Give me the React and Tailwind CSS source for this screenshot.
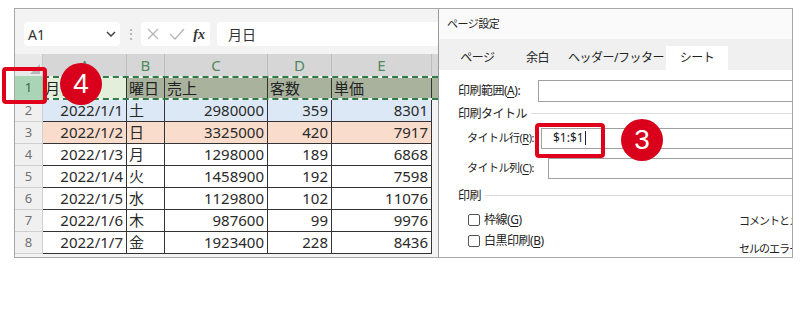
import React from 'react';

const rows = [
  { n: 2, date: '2022/1/1', day: '土', sales: '2980000', cust: '359', unit: '8301', bg: 'bg-[#dce8f5]' },
  { n: 3, date: '2022/1/2', day: '日', sales: '3325000', cust: '420', unit: '7917', bg: 'bg-[#f9dccc]' },
  { n: 4, date: '2022/1/3', day: '月', sales: '1298000', cust: '189', unit: '6868', bg: 'bg-white' },
  { n: 5, date: '2022/1/4', day: '火', sales: '1458900', cust: '192', unit: '7598', bg: 'bg-white' },
  { n: 6, date: '2022/1/5', day: '水', sales: '1129800', cust: '102', unit: '11076', bg: 'bg-white' },
  { n: 7, date: '2022/1/6', day: '木', sales: '987600', cust: '99', unit: '9976', bg: 'bg-white' },
  { n: 8, date: '2022/1/7', day: '金', sales: '1923400', cust: '228', unit: '8436', bg: 'bg-white' },
];

const cols = [
  { key: 'A', w: 'w-[84px]' },
  { key: 'B', w: 'w-[38px]' },
  { key: 'C', w: 'w-[103px]' },
  { key: 'D', w: 'w-[64px]' },
  { key: 'E', w: 'w-[100px]' },
];

function Key({ k }) {
  return <span className="underline underline-offset-2">{k}</span>;
}

function Checkbox({ label, k }) {
  return (
    <div className="flex items-center h-[21px] pl-[29px] text-[12px] tracking-[-0.5px] text-[#222] whitespace-nowrap">
      <span className="w-[12px] h-[12px] border border-[#555] rounded-[2px] bg-white mr-[4px] shrink-0" />
      <span>
        {label}(<Key k={k} />)
      </span>
    </div>
  );
}

function App() {
  return (
    <div className="relative w-[800px] h-[333px] bg-white overflow-hidden font-['Noto_Sans','Noto_Sans_CJK_JP',sans-serif]">
      <div className="ml-[14px] mt-[8px] w-[779px] h-[250px] border border-[#a8a8a8] flex overflow-hidden">
        {/* Excel pane */}
        <div className="w-[423px] shrink-0 bg-[#f3f3f3] flex flex-col">
          <div className="flex items-center h-[24px] mt-[13px] pl-[9px]">
            <div className="w-[96px] h-[24px] bg-white rounded-[4px] flex items-center justify-between px-[4px] text-[14px] text-[#333]">
              <span>A1</span>
              <svg width="10" height="6" viewBox="0 0 10 6" fill="none" stroke="#444" strokeWidth="1.5">
                <path d="M1 1l4 4 4-4" />
              </svg>
            </div>
            <div className="w-[21px] flex justify-center text-[#999] text-[12px]">⋮</div>
            <div className="w-[69px] h-[24px] bg-white rounded-[4px] flex items-center justify-between px-[5px]">
              <svg width="14" height="14" viewBox="0 0 14 14" fill="none" stroke="#b5b5b5" strokeWidth="1.3">
                <path d="M2 2l10 10M12 2L2 12" />
              </svg>
              <svg width="16" height="14" viewBox="0 0 16 14" fill="none" stroke="#b5b5b5" strokeWidth="1.3">
                <path d="M1 7l5 5 9-10" />
              </svg>
              <span className="text-[14px] italic font-['Liberation_Serif',serif] font-bold text-[#333]">fx</span>
            </div>
            <div className="flex-1 h-[24px] ml-[7px] bg-white rounded-l-[4px] flex items-center pl-[11px] text-[14px] text-[#333]">
              月日
            </div>
          </div>

          <div className="mt-[8px] flex flex-col">
            {/* column headers */}
            <div className="flex h-[22px] text-[15px]">
              <div className="w-[28px] bg-[#e8e8e8] border-r border-[#c8c8c8] relative">
                <div className="absolute right-[2px] bottom-[2px] w-0 h-0 border-l-[10px] border-l-transparent border-b-[10px] border-b-[#b8b8b8]" />
              </div>
              {cols.map((c) => (
                <div key={c.key} className={`${c.w} bg-[#d6d6d6] border-r border-[#bdbdbd] flex items-center justify-center text-[#4f8a60]`}>
                  {c.key}
                </div>
              ))}
              <div className="flex-1 bg-[#d6d6d6]" />
            </div>

            {/* row 1 */}
            <div className="flex h-[24px] text-[15px] text-[#222]">
              <div className="w-[28px] bg-[#a9d4b5] border-r border-[#9bbfa5] flex items-center justify-center text-[#2f6b43] text-[13px]">1</div>
              <div className="flex border-y-2 border-dashed border-[#2e7d46]">
                <div className="w-[84px] bg-[#e3efda] border-r border-[#333] pl-[2px] flex items-center">月日</div>
                <div className="w-[38px] bg-[#a9b29d] border-r border-[#333] pl-[2px] flex items-center">曜日</div>
                <div className="w-[103px] bg-[#a9b29d] border-r border-[#333] pl-[2px] flex items-center">売上</div>
                <div className="w-[64px] bg-[#a9b29d] border-r border-[#333] pl-[2px] flex items-center">客数</div>
                <div className="w-[100px] bg-[#a9b29d] border-r border-[#333] pl-[2px] flex items-center">単価</div>
                <div className="w-[6px] bg-[#a9b29d]" />
              </div>
            </div>

            {rows.map((r) => (
              <div key={r.n} className="flex h-[22px] text-[15px] text-[#2a2a2a] leading-none">
                <div className="w-[28px] bg-[#f0f0f0] border-r border-b border-[#d0d0d0] flex items-center justify-center text-[#707070] text-[13px]">{r.n}</div>
                <div className={`w-[84px] ${r.bg} border-r border-b border-[#333] flex items-center justify-end pr-[3px]`}>{r.date}</div>
                <div className={`w-[38px] ${r.bg} border-r border-b border-[#333] flex items-center pl-[2px]`}>{r.day}</div>
                <div className={`w-[103px] ${r.bg} border-r border-b border-[#333] flex items-center justify-end pr-[3px]`}>{r.sales}</div>
                <div className={`w-[64px] ${r.bg} border-r border-b border-[#333] flex items-center justify-end pr-[3px]`}>{r.cust}</div>
                <div className={`w-[100px] ${r.bg} border-r border-b border-[#333] flex items-center justify-end pr-[3px]`}>{r.unit}</div>
                <div className="flex-1 bg-[#f3f3f3]" />
              </div>
            ))}
          </div>
        </div>

        {/* Page setup dialog */}
        <div className="flex-1 border-l border-[#9a9a9a] bg-white flex flex-col text-[#222] whitespace-nowrap">
          <div className="h-[31px] bg-[#fafafa] flex items-center pl-[8px] text-[11px] tracking-[-0.5px]">ページ設定</div>
          <div className="h-[32px] bg-[#f0f0f0] flex items-end pl-[7px] text-[12px] tracking-[-0.5px]">
            <div className="w-[63px] h-[24px] flex items-center justify-center">ページ</div>
            <div className="w-[57px] h-[24px] flex items-center justify-center">余白</div>
            <div className="w-[100px] h-[24px] flex items-center justify-center">ヘッダー/フッター</div>
            <div className="w-[62px] h-[24px] bg-white flex items-center justify-center">シート</div>
          </div>

          <div className="flex-1 pt-[10px] text-[12px] tracking-[-0.5px]">
            <div className="flex items-center h-[22px] pl-[19px]">
              <span className="w-[80px] shrink-0">印刷範囲(<Key k="A" />):</span>
              <div className="flex-1 h-[22px] border border-[#a0a0a0] border-r-0" />
            </div>
            <div className="flex items-center h-[24px] pl-[19px]">
              <span>印刷タイトル</span>
              <div className="flex-1 h-px bg-[#dcdcdc] ml-[4px]" />
            </div>
            <div className="flex items-center h-[21px] mt-[2px] pl-[28px]">
              <span className="w-[74px] shrink-0 text-[11px]">タイトル行(<Key k="R" />):</span>
              <div className="flex-1 h-[21px] border border-[#a0a0a0] border-r-0 flex items-center pl-[11px] text-[12px] tracking-normal">
                $1:$1<span className="w-px h-[14px] bg-[#222] ml-[1px]" />
              </div>
            </div>
            <div className="flex items-center h-[21px] mt-[9px] pl-[28px]">
              <span className="w-[81px] shrink-0 text-[11px]">タイトル列(<Key k="C" />):</span>
              <div className="flex-1 h-[21px] border border-[#a0a0a0] border-r-0" />
            </div>
            <div className="flex items-center h-[22px] mt-[6px] pl-[19px]">
              <span>印刷</span>
              <div className="flex-1 h-px bg-[#dcdcdc] ml-[4px]" />
            </div>
            <div className="flex">
              <div className="w-[300px] shrink-0 pt-[3px]">
                <Checkbox label="枠線" k="G" />
                <Checkbox label="白黒印刷" k="B" />
              </div>
              <div className="pt-[6px] text-[11px] tracking-[-1px]">
                <div className="h-[28px]">コメントとメモ</div>
                <div>セルのエラー</div>
              </div>
            </div>
          </div>
        </div>
      </div>

      {/* annotations */}
      <div className="absolute left-[2px] top-[67px] w-[45px] h-[37px] border-[4px] border-[#e0001b] rounded-[4px]" />
      <div className="absolute left-[60px] top-[63px] w-[42px] h-[42px] rounded-full bg-[#d8001a] flex items-center justify-center text-white text-[28px] font-['Liberation_Sans',sans-serif]">4</div>
      <div className="absolute left-[535px] top-[123px] w-[70px] h-[35px] border-[4px] border-[#e0001b] rounded-[4px]" />
      <div className="absolute left-[621px] top-[119px] w-[42px] h-[42px] rounded-full bg-[#d8001a] flex items-center justify-center text-white text-[28px] font-['Liberation_Sans',sans-serif]">3</div>
    </div>
  );
}

export default App;
